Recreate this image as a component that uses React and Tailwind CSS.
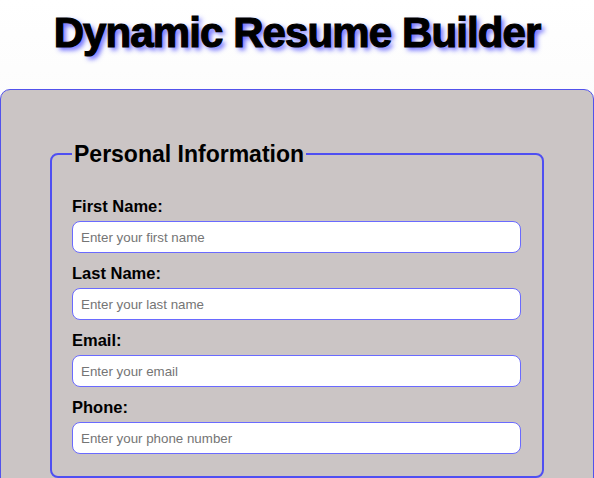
export default function App() {
  const fields = [
    { label: "First Name:", ph: "Enter your first name", type: "text" },
    { label: "Last Name:", ph: "Enter your last name", type: "text" },
    { label: "Email:", ph: "Enter your email", type: "email" },
    { label: "Phone:", ph: "Enter your phone number", type: "tel" },
  ];
  return (
    <div
      className="min-h-[478px] bg-gradient-to-b from-white to-[#f0f0f0] overflow-hidden"
      style={{ fontFamily: '"Liberation Sans", Arial, sans-serif' }}
    >
      <h1
        className="text-center text-[42px] font-bold text-black leading-[46px] pt-[10px] pb-[33px] tracking-[-0.9px] [-webkit-text-stroke:1.2px_black]"
        style={{ textShadow: "3px 3px 5px rgba(80,80,255,0.9)" }}
      >
        Dynamic Resume Builder
      </h1>
      <div className="border border-[#5252ec] rounded-[10px] bg-[#cbc5c5] pt-[51px] px-[49px] pb-[40px]">
        <fieldset className="border-2 border-[#4f4ff2] rounded-[8px] pl-[20px] pr-[21px] pb-[22px] pt-[30px]">
          <legend className="px-[2px] text-[23px] font-bold leading-[26px] text-black">
            Personal Information
          </legend>
          <div className="flex flex-col gap-[11px]">
            {fields.map((f) => (
              <div key={f.label} className="flex flex-col">
                <label className="text-[16.5px] font-bold leading-[18px] text-black mb-[6px]">
                  {f.label}
                </label>
                <input
                  type={f.type}
                  placeholder={f.ph}
                  className="h-[32px] w-full bg-white border border-[#6a6aff] rounded-[8px] px-[8px] text-[13.33px] placeholder:text-[#757575] outline-none"
                />
              </div>
            ))}
          </div>
        </fieldset>
      </div>
    </div>
  );
}
